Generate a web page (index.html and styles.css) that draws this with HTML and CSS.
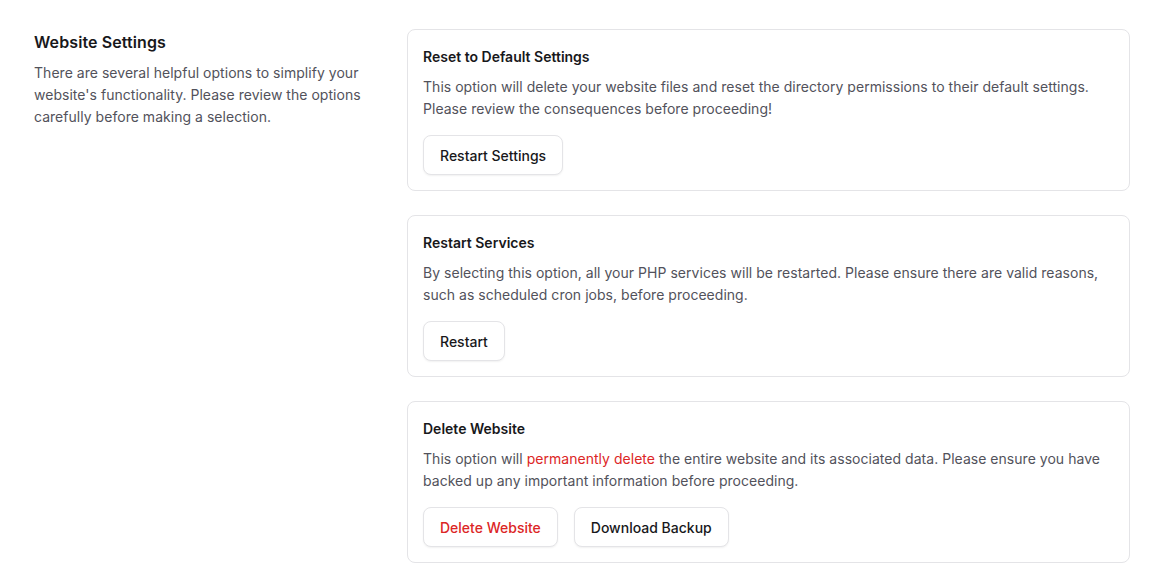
FILE: index.html
```html
<!DOCTYPE html>
<html lang="en">
<head>
  <meta charset="UTF-8">
  <meta name="viewport" content="width=device-width, initial-scale=1.0">
  <title>Website Settings</title>
  <link rel="stylesheet" href="styles.css">
</head>
<body>
  <div class="settings">
    <div class="intro">
      <h2>Website Settings</h2>
      <p>There are several helpful options to simplify your website's functionality. Please review the options carefully before making a selection.</p>
    </div>
    <div class="cards">
      <div class="card">
        <h3>Reset to Default Settings</h3>
        <p>This option will delete your website files and reset the directory permissions to their default settings. Please review the consequences before proceeding!</p>
        <div class="actions">
          <button class="btn">Restart Settings</button>
        </div>
      </div>
      <div class="card">
        <h3>Restart Services</h3>
        <p>By selecting this option, all your PHP services will be restarted. Please ensure there are valid reasons, such as scheduled cron jobs, before proceeding.</p>
        <div class="actions">
          <button class="btn">Restart</button>
        </div>
      </div>
      <div class="card">
        <h3>Delete Website</h3>
        <p>This option will <span class="danger">permanently delete</span> the entire website and its associated data. Please ensure you have backed up any important information before proceeding.</p>
        <div class="actions">
          <button class="btn danger">Delete Website</button>
          <button class="btn">Download Backup</button>
        </div>
      </div>
    </div>
  </div>
</body>
</html>
```

FILE: styles.css
```css
body {
  margin: 0;
  font-family: Inter, 'Noto Sans', sans-serif;
  background-color: #fff;
  color: #18181b;
}
.settings {
  display: grid;
  grid-template-columns: 341px 723px;
  gap: 32px;
  padding: 29px 34px;
}
.intro h2 {
  margin: 1px 0 8px;
  font-size: 16px;
  line-height: 24px;
  font-weight: 600;
  letter-spacing: 0.1px;
}
.intro p {
  margin: 0;
  font-size: 14px;
  line-height: 22px;
  color: #52525b;
  letter-spacing: 0.03px;
}
.cards {
  display: flex;
  flex-direction: column;
  gap: 24px;
}
.card {
  border: 1px solid #e4e4e7;
  border-radius: 8px;
  padding: 17px 15px 15px;
}
.card h3 {
  margin: 0;
  font-size: 14px;
  line-height: 20px;
  font-weight: 600;
}
.card p {
  margin: 9px 0 0;
  font-size: 14px;
  line-height: 22px;
  color: #52525b;
  letter-spacing: 0.03px;
}
.actions {
  display: flex;
  gap: 16px;
  margin-top: 15px;
}
.btn {
  height: 40px;
  padding: 0 16px;
  font-family: inherit;
  font-size: 14px;
  font-weight: 500;
  color: #18181b;
  background-color: #fff;
  border: 1px solid #e4e4e7;
  border-radius: 8px;
  box-shadow: 0 1px 2px rgba(0, 0, 0, 0.06);
  cursor: pointer;
}
.danger {
  color: #dc2626;
}
```
